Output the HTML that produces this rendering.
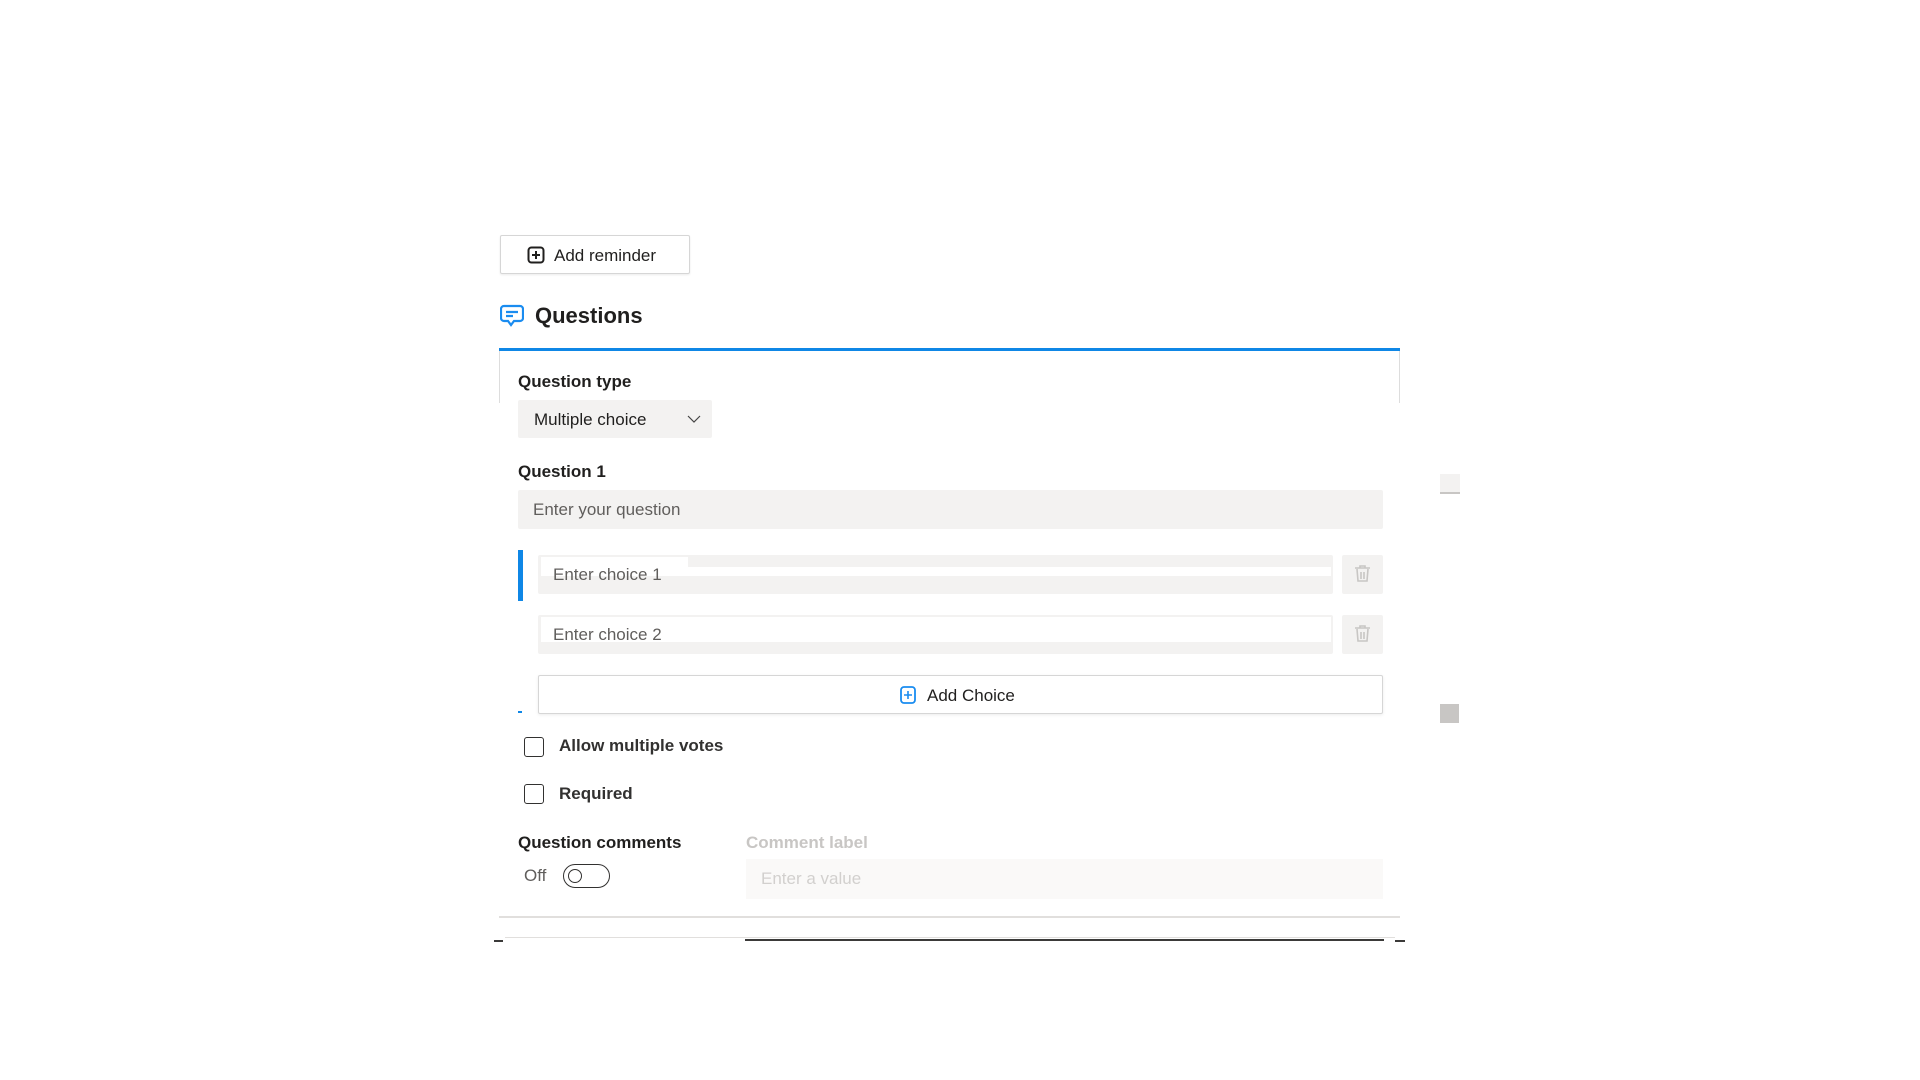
<!DOCTYPE html>
<html><head><meta charset="utf-8"><style>
*{box-sizing:border-box;margin:0;padding:0}
body{width:1920px;height:1080px;background:#fff;position:relative;font-family:"Liberation Sans",sans-serif;color:#323130;overflow:hidden}
.a{position:absolute}
.t{font-size:17px;line-height:20px}
.b{font-weight:bold;color:#201f1e}
.inp{background:#f3f2f1;border-radius:2px}
.ph{color:#605e5c}
</style></head><body>
<div class="a" style="left:500px;top:235px;width:190px;height:39px;border:1px solid #d6d6d6;border-radius:2px;box-shadow:0 1px 2px rgba(0,0,0,.08)"></div>
<svg class="a" style="left:527px;top:246px" width="18" height="18" viewBox="0 0 18 18"><rect x="1.5" y="1.5" width="15" height="15" rx="3" fill="none" stroke="#201f1e" stroke-width="2"/><path d="M9 5v8M5 9h8" stroke="#201f1e" stroke-width="2"/></svg>
<div class="a t" style="left:554px;top:246px;color:#201f1e">Add reminder</div>
<svg class="a" style="left:500px;top:304px" width="24" height="24" viewBox="0 0 24 24"><path d="M4 2h16a3 3 0 0 1 3 3v9a3 3 0 0 1-3 3h-6l-3 4-3-4H4a3 3 0 0 1-3-3V5a3 3 0 0 1 3-3z" fill="none" stroke="#1a8cf0" stroke-width="2.2"/><path d="M6 8h12M6 12h7" stroke="#1a8cf0" stroke-width="2.2"/></svg>
<div class="a b" style="left:535px;top:302px;font-size:22px;line-height:28px">Questions</div>
<div class="a" style="left:499px;top:348px;width:901px;height:3px;background:#0f87e6"></div>
<div class="a" style="left:499px;top:351px;width:1px;height:52px;background:#ddd"></div>
<div class="a" style="left:1399px;top:351px;width:1px;height:52px;background:#ddd"></div>
<div class="a t b" style="left:518px;top:372px">Question type</div>
<div class="a inp" style="left:518px;top:400px;width:194px;height:38px"></div>
<div class="a t" style="left:534px;top:410px;color:#201f1e">Multiple choice</div>
<svg class="a" style="left:687px;top:414px" width="14" height="10"><path d="M1 2l6 6 6-6" fill="none" stroke="#444" stroke-width="1.2"/></svg>
<div class="a t b" style="left:518px;top:462px">Question 1</div>
<div class="a inp" style="left:518px;top:490px;width:865px;height:39px"></div>
<div class="a t ph" style="left:533px;top:500px">Enter your question</div>
<div class="a" style="left:518px;top:550px;width:5px;height:51px;background:#0f87e6"></div>
<div class="a inp" style="left:538px;top:555px;width:795px;height:39px"></div>
<div class="a" style="left:541px;top:557px;width:147px;height:12px;background:#fff"></div>
<div class="a" style="left:541px;top:567px;width:790px;height:9px;background:#fff"></div>
<div class="a t ph" style="left:553px;top:565px">Enter choice 1</div>
<div class="a inp" style="left:1342px;top:555px;width:41px;height:39px"></div>
<svg class="a" style="left:1353px;top:564px" width="19" height="20" viewBox="0 0 19 20"><path d="M2 4h15M7 4V2h5v2M4 5l1 12h9l1-12M8 8v7M11 8v7" fill="none" stroke="#c8c6c4" stroke-width="1.6"/></svg>
<div class="a inp" style="left:538px;top:615px;width:795px;height:39px"></div>
<div class="a" style="left:541px;top:617px;width:790px;height:25px;background:#fff"></div>
<div class="a t ph" style="left:553px;top:625px">Enter choice 2</div>
<div class="a inp" style="left:1342px;top:615px;width:41px;height:39px"></div>
<svg class="a" style="left:1353px;top:624px" width="19" height="20" viewBox="0 0 19 20"><path d="M2 4h15M7 4V2h5v2M4 5l1 12h9l1-12M8 8v7M11 8v7" fill="none" stroke="#c8c6c4" stroke-width="1.6"/></svg>
<div class="a" style="left:538px;top:675px;width:845px;height:39px;border:1px solid #d6d6d6;border-radius:2px;box-shadow:0 1px 3px rgba(0,0,0,.08)"></div>
<svg class="a" style="left:900px;top:686px" width="16" height="18" viewBox="0 0 16 18"><rect x="1" y="1" width="14" height="16" rx="3" fill="none" stroke="#1a8cf0" stroke-width="1.8"/><path d="M8 5v8M4 9h8" stroke="#1a8cf0" stroke-width="1.6"/></svg>
<div class="a t" style="left:927px;top:686px;color:#201f1e">Add Choice</div>
<div class="a" style="left:518px;top:711px;width:4px;height:2px;background:#0f87e6"></div>
<div class="a" style="left:524px;top:737px;width:20px;height:20px;border:1.5px solid #323130;border-radius:3px"></div>
<div class="a t b" style="left:559px;top:736px;color:#323130">Allow multiple votes</div>
<div class="a" style="left:524px;top:784px;width:20px;height:20px;border:1.5px solid #323130;border-radius:3px"></div>
<div class="a t b" style="left:559px;top:784px;color:#323130">Required</div>
<div class="a t b" style="left:518px;top:833px">Question comments</div>
<div class="a t b" style="left:746px;top:833px;color:#c8c6c4">Comment label</div>
<div class="a t" style="left:524px;top:866px;color:#605e5c">Off</div>
<div class="a" style="left:563px;top:864px;width:47px;height:24px;border:1.5px solid #323130;border-radius:12px"></div>
<div class="a" style="left:568px;top:869px;width:14px;height:14px;border:1.5px solid #323130;border-radius:50%"></div>
<div class="a" style="left:746px;top:859px;width:637px;height:40px;background:#faf9f8"></div>
<div class="a t" style="left:761px;top:869px;color:#d2d0ce">Enter a value</div>
<div class="a" style="left:499px;top:916px;width:901px;height:2px;background:#e1dfdd"></div>
<div class="a" style="left:505px;top:937px;width:890px;height:1px;background:#e1dfdd"></div>
<div class="a" style="left:745px;top:939px;width:639px;height:2px;background:#3b3a39"></div>
<div class="a" style="left:494px;top:940px;width:9px;height:2px;background:#3b3a39"></div>
<div class="a" style="left:1395px;top:940px;width:10px;height:2px;background:#3b3a39"></div>
<div class="a" style="left:1440px;top:474px;width:20px;height:20px;background:#f3f2f1;border-bottom:2px solid #c8c6c4"></div>
<div class="a" style="left:1440px;top:704px;width:19px;height:19px;background:#c8c6c4"></div>
</body></html>
